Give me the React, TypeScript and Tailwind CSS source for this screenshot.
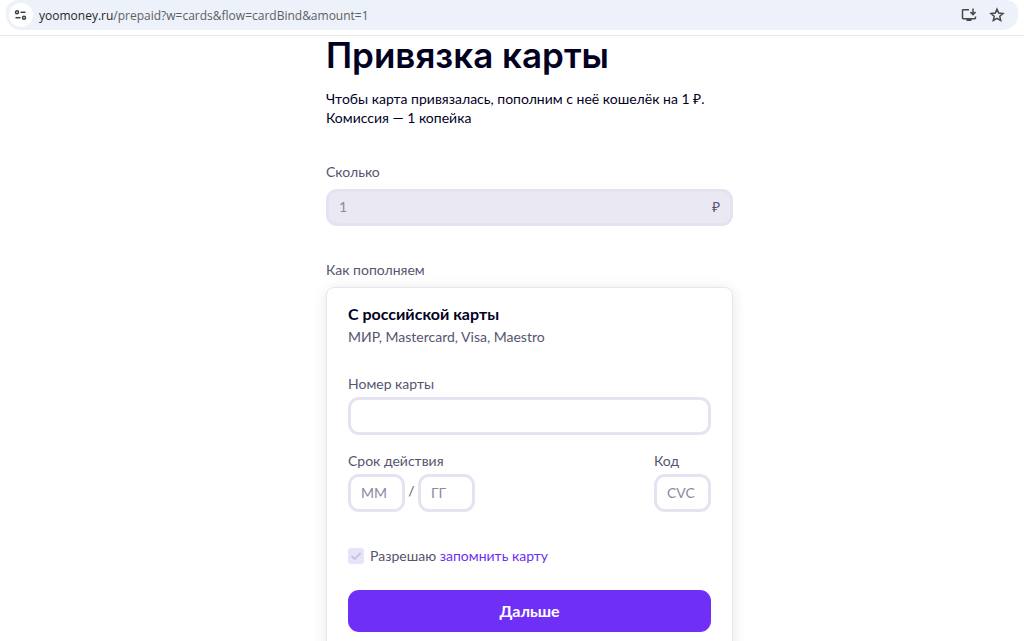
import { useState } from "react"
import type { InputHTMLAttributes } from "react"
import clsx from "clsx"

const Field = ({ className, ...props }: InputHTMLAttributes<HTMLInputElement>) => (
  <input
    type="text"
    className={clsx(
      "block rounded-[11px] border-[3px] border-[#e5e3f1] px-[10px] pb-[2px] text-sm placeholder-[#8b8a9e] outline-none",
      className
    )}
    {...props}
  />
)

const TuneIcon = () => (
  <svg className="h-[14px] w-[14px]" viewBox="0 0 14 14" fill="none" stroke="#3f4043" strokeWidth="1.5">
    <circle cx="3" cy="4.3" r="1.5" />
    <path d="M6.5 4.3H11.5" />
    <circle cx="10" cy="9.7" r="1.5" />
    <path d="M1.5 9.7H6.5" />
  </svg>
)

const InstallIcon = () => (
  <svg className="h-4 w-4" viewBox="0 0 16 16" fill="none" stroke="#474747" strokeWidth="1.5">
    <path d="M8 2.7H2.2Q1.5 2.7 1.5 3.4V11Q1.5 11.7 2.2 11.7H13.8Q14.5 11.7 14.5 11V9.5" />
    <path d="M12 1.5V7.3M9.4 5L12 7.6L14.6 5" />
    <path d="M5.5 13H10.5" strokeWidth="2" />
  </svg>
)

const StarIcon = () => (
  <svg className="h-4 w-4" viewBox="0 0 16 16" fill="none" stroke="#474747" strokeWidth="1.5">
    <path d="M8 2.2L9.7 6.1L14 6.5L10.8 9.3L11.7 13.5L8 11.3L4.3 13.5L5.2 9.3L2 6.5L6.3 6.1Z" />
  </svg>
)

const AddressBar = () => (
  <header className="h-9 border-b border-[#e7e7e8] px-[6px]">
    <div className="flex h-[30px] items-center rounded-b-[15px] rounded-t-[12px] bg-[#ecf1fa] pl-[3px] pr-[13px]">
      <button type="button" aria-label="Сведения о сайте" className="flex h-6 w-6 items-center justify-center rounded-full bg-white">
        <TuneIcon />
      </button>
      <div className="ml-[6px] flex-1 whitespace-nowrap pt-px font-['Open_Sans',sans-serif] text-xs text-[#5c5f64]">
        <span className="text-[#26272b]">yoomoney.ru</span>/prepaid?w=cards&amp;flow=cardBind&amp;amount=1
      </div>
      <div className="flex gap-3">
        <button type="button" aria-label="Установить приложение"><InstallIcon /></button>
        <button type="button" aria-label="Добавить в закладки"><StarIcon /></button>
      </div>
    </div>
  </header>
)

export default function App() {
  const [number, setNumber] = useState("")
  const [month, setMonth] = useState("")
  const [year, setYear] = useState("")
  const [code, setCode] = useState("")

  return (
    <div className="h-screen overflow-hidden bg-white font-[Lato,sans-serif] text-sm text-[#56556f]">
      <AddressBar />
      <main className="pl-[35px]">
        <form className="mx-auto max-w-[407px]" onSubmit={(e) => e.preventDefault()}>
          <h1 className="font-[Inter,sans-serif] text-[35px] font-semibold leading-[38px] text-[#02011f]">Привязка карты</h1>
          <p className="mt-[15px] whitespace-nowrap leading-[19px] text-[#02011f]">
            Чтобы карта привязалась, пополним с неё кошелёк на 1 ₽.
            <br />
            Комиссия — 1 копейка
          </p>

          <label htmlFor="amount" className="mt-[35px] block leading-5">Сколько</label>
          <div className="relative mt-[7px]">
            <Field id="amount" className="h-[37px] w-full bg-[#eae9f3] text-[#8b8a9e]" value="1" disabled />
            <span className="absolute right-[13px] top-2 leading-5">₽</span>
          </div>

          <h2 className="mt-[34px] leading-5">Как пополняем</h2>
          <section className="mt-[7px] rounded-lg border border-[#e7e7ea] px-[21px] pb-8 pt-4 shadow-[0_2px_14px_rgba(0,0,0,0.1)]">
            <h3 className="text-base font-bold leading-5 text-[#02011f]">С российской карты</h3>
            <p className="mt-[3px] leading-5">МИР, Mastercard, Visa, Maestro</p>

            <label htmlFor="number" className="mt-[27px] block leading-5">Номер карты</label>
            <Field id="number" className="mt-[3px] h-[38px] w-full bg-white text-[#02011f]" value={number} onChange={(e) => setNumber(e.target.value)} />

            <div className="mt-4 flex justify-between">
              <div>
                <label htmlFor="month" className="block leading-5">Срок действия</label>
                <div className="mt-[3px] flex">
                  <Field id="month" className="h-[38px] w-[57px] bg-white text-[#02011f]" placeholder="ММ" value={month} onChange={(e) => setMonth(e.target.value)} />
                  <span className="w-[13px] pt-[7px] text-center leading-5">/</span>
                  <Field aria-label="Год" className="h-[38px] w-[57px] bg-white text-[#02011f]" placeholder="ГГ" value={year} onChange={(e) => setYear(e.target.value)} />
                </div>
              </div>
              <div>
                <label htmlFor="code" className="block leading-5">Код</label>
                <Field id="code" className="mt-[3px] h-[38px] w-[57px] bg-white text-[#02011f]" placeholder="CVC" value={code} onChange={(e) => setCode(e.target.value)} />
              </div>
            </div>

            <div className="mt-[34px] flex items-center">
              <span className="relative h-4 w-4">
                <input id="save" type="checkbox" checked disabled className="block h-4 w-4 appearance-none rounded-[3px] bg-[#e6e4fb]" />
                <svg className="pointer-events-none absolute inset-0" viewBox="0 0 16 16" fill="none" stroke="#c5c3dc" strokeWidth="1.8">
                  <path d="M3.5 8L6.7 11L12.7 5" />
                </svg>
              </span>
              <div className="ml-[6px] whitespace-nowrap leading-5">
                <label htmlFor="save">Разрешаю</label> <a href="#save" className="text-[#6d2ff5]">запомнить карту</a>
              </div>
            </div>

            <button type="submit" className="mt-6 h-[42px] w-full rounded-[11px] bg-[#6f2ff6] text-base font-bold text-white">
              Дальше
            </button>
          </section>
        </form>
      </main>
    </div>
  )
}
